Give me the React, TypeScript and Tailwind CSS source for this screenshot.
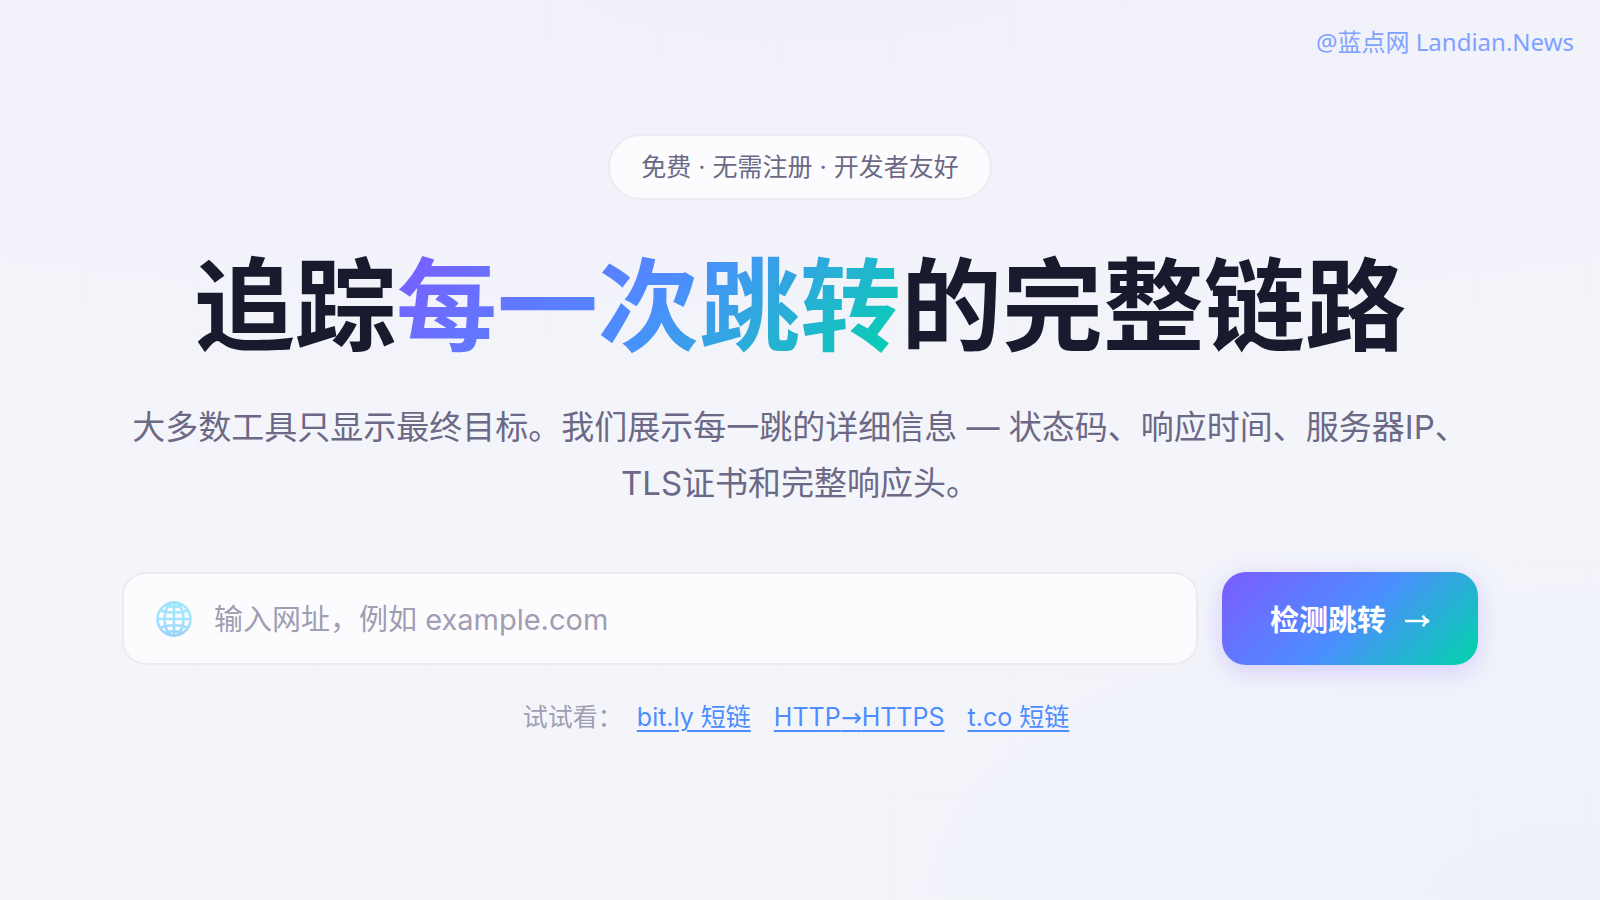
export default function App() {
  return (
    <div className="min-h-screen bg-[#f4f5fa] bg-[radial-gradient(ellipse_140%_50%_at_50%_0%,rgba(124,92,255,0.03),transparent),radial-gradient(ellipse_60%_50%_at_100%_100%,rgba(77,141,255,0.04),transparent)] font-['Inter','Noto_Sans_CJK_SC',sans-serif] text-[#1a1a2e]">
      <div className="min-h-screen bg-[linear-gradient(90deg,rgba(30,30,80,0.008)_1px,transparent_1px),linear-gradient(rgba(30,30,80,0.008)_1px,transparent_1px)] bg-size-[116px_116px] bg-position-[81px_96px]">
        <header className="flex justify-end px-[26px] pt-6">
          <a href="#" className="font-['Noto_Sans','Noto_Sans_CJK_SC',sans-serif] text-2xl leading-9 text-[#7fa2ff]">@蓝点网 Landian.News</a>
        </header>
        <main className="mx-auto flex max-w-[1356px] flex-col items-center pt-[74px] text-center">
          <p className="rounded-full border-2 border-[#ebebf0] bg-[#fcfcfe] px-[31px] py-3 text-[25px] leading-[38px] text-[#6b6985]">免费 · 无需注册 · 开发者友好</p>
          <h1 className="mt-[46px] text-[101px] leading-[120px] font-bold whitespace-nowrap">
            追踪<span className="bg-linear-[135deg,#7c5cff,#4d8dff_50%,#00d4aa] bg-clip-text text-transparent">每一次跳转</span>的完整链路
          </h1>
          <p className="mt-[33px] text-[33px] leading-[56px] text-[#6b6985]">
            大多数工具只显示最终目标。我们展示每一跳的详细信息 — 状态码、响应时间、服务器IP、TLS证书和完整响应头。
          </p>
          <form className="mt-[61px] flex w-full gap-6" onSubmit={(e) => e.preventDefault()}>
            <label className="flex h-[93px] flex-1 items-center gap-[22px] rounded-3xl border-2 border-[#ebebf0] bg-[#fcfcfe] px-8">
              <Globe />
              <input type="url" aria-label="网址" placeholder="输入网址，例如 example.com" className="min-w-0 flex-1 bg-transparent pt-[3px] text-[29px] outline-none placeholder:text-[#a09eb2]" />
            </label>
            <button type="submit" className="flex h-[93px] w-64 items-center justify-center gap-[18px] rounded-3xl bg-linear-[135deg,#7c5cff,#4d8dff_50%,#00d4aa] pt-1 text-[29px] font-bold text-white shadow-[0_6px_24px_rgba(124,92,255,0.25)]">
              检测跳转
              <Arrow />
            </button>
          </form>
          <div className="mt-[34px] flex items-center gap-[14px] pr-2 text-[25px] text-[#4d8dff]">
            <span className="text-[#a09eb2]">试试看：</span>
            <nav className="flex gap-[23px]">
              <a href="#" className="underline decoration-2 underline-offset-4">bit.ly 短链</a>
              <a href="#" className="underline decoration-2 underline-offset-4">HTTP<span className="font-['DejaVu_Sans',sans-serif]">→</span>HTTPS</a>
              <a href="#" className="underline decoration-2 underline-offset-4">t.co 短链</a>
            </nav>
          </div>
        </main>
      </div>
    </div>
  );
}

function Arrow() {
  return (
    <svg aria-hidden="true" className="h-4 w-[26px]" viewBox="0 0 26 16" fill="none" stroke="currentColor" strokeWidth="2.4">
      <path d="M1 8h24M19 2.500c1 2.800 3 4.800 6 5.500-3 .7-5 2.700-6 5.500" />
    </svg>
  );
}

function Globe() {
  return (
    <svg aria-hidden="true" className="size-9" viewBox="0 0 36 36" fill="none" stroke="url(#globe)" strokeWidth="2.6">
      <defs>
        <linearGradient id="globe" gradientUnits="userSpaceOnUse" x1="18" y1="0" x2="18" y2="36">
          <stop stopColor="#9be6fb" />
          <stop offset="0.5" stopColor="#a6e4ff" />
          <stop offset="1" stopColor="#9bd0f9" />
        </linearGradient>
      </defs>
      <circle cx="18" cy="18" r="16.500" />
      <ellipse cx="18" cy="18" rx="9.500" ry="16.500" />
      <path d="M18 1v34M1 18h34M4.500 9.500C12 12.500 24 12.500 31.500 9.500M4.500 26.500C12 23.500 24 23.500 31.500 26.500" />
      <path d="M10 4.500Q18 7 26 4.500M10 31.500Q18 29 26 31.500" />
    </svg>
  );
}
